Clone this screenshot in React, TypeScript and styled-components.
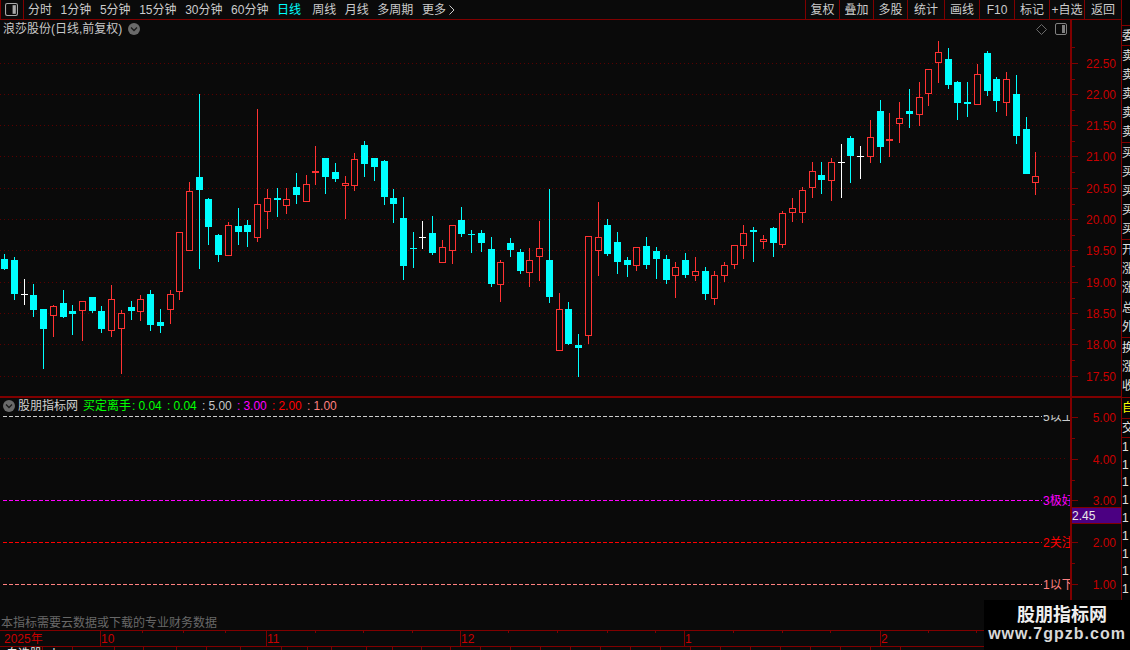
import React from "react";
import styled, { createGlobalStyle } from "styled-components";

const FONT = '"Liberation Sans", "Noto Sans CJK SC", sans-serif';
const BG = "#0a0a0a";
const LINE = "#800000";
const AXIS = "#c80000";
const GRID = "#5a0000";

const Global = createGlobalStyle`
  html, body { margin: 0; padding: 0; background: ${BG}; }
  * { box-sizing: border-box; }
`;

const Page = styled.div`
  position: relative;
  width: 1130px;
  height: 650px;
  display: flex;
  overflow: hidden;
  background: ${BG};
  font: 12px/1 ${FONT};
  color: #cccccc;
`;
const LeftColumn = styled.div`
  width: 1122px;
  flex: none;
  display: flex;
  flex-direction: column;
  border-right: 1px solid ${LINE};
`;
const TopBar = styled.div`
  height: 20px;
  flex: none;
  display: flex;
  align-items: stretch;
  border-bottom: 1px solid ${LINE};
`;
const LayoutButton = styled.div`
  width: 24px;
  display: flex;
  align-items: center;
  justify-content: center;
  border-left: 1px solid ${LINE};
  border-right: 1px solid ${LINE};
  padding-right: 1px;
`;
const PeriodList = styled.div`
  display: flex;
  align-items: center;
  gap: 8.6px;
  padding-left: 4px;
`;
const PeriodItem = styled.span<{ $active?: boolean }>`
  color: ${(p) => (p.$active ? "#00ffff" : "#cccccc")};
  margin-right: ${(p) => (p.$active ? "2.5px" : "0")};
  display: inline-flex;
  align-items: center;
  gap: 3px;
  white-space: nowrap;
`;
const ToolList = styled.div`
  margin-left: auto;
  display: flex;
  align-items: stretch;
`;
const ToolButton = styled.div<{ $w: number }>`
  width: ${(p) => p.$w}px;
  display: flex;
  align-items: center;
  justify-content: center;
  border-left: 1px solid ${LINE};
  white-space: nowrap;
`;
const Pane = styled.div<{ $h: number; $divider?: boolean }>`
  height: ${(p) => p.$h}px;
  flex: none;
  display: grid;
  grid-template-columns: 1070px 51px;
  border-bottom: ${(p) => (p.$divider ? `2px solid ${LINE}` : "none")};
`;
const PlotArea = styled.div`
  position: relative;
  display: flex;
  flex-direction: column;
  overflow: hidden;
`;
const ChartSvg = styled.svg`
  position: absolute;
  left: 0;
  top: 0;
  display: block;
  shape-rendering: crispEdges;
  font-family: ${FONT};
  font-size: 12px;
`;
const PaneHeader = styled.div`
  position: relative;
  display: flex;
  align-items: center;
  height: 18px;
  padding: 0 3px;
`;
const Title = styled.span`
  color: #c8c8c8;
  white-space: nowrap;
  margin-right: 6px;
`;
const HeaderIcons = styled.div`
  margin-left: auto;
  display: flex;
  align-items: center;
  gap: 8px;
`;
const LegendRow = styled.div`
  position: relative;
  display: flex;
  align-items: center;
  height: 15px;
  padding-left: 3px;
`;
const LegendName = styled.span`
  color: #d0d0d0;
  margin: 0 5px 0 3px;
  white-space: nowrap;
`;
const LegendLabel = styled.span`
  color: #00ff00;
  white-space: nowrap;
`;
const LegendValue = styled.span<{ $c: string }>`
  display: inline-flex;
  width: 35px;
  flex: none;
  padding-left: 1px;
  gap: 3px;
  color: ${(p) => p.$c};
  white-space: nowrap;
`;
const Notice = styled.div`
  position: relative;
  margin-top: auto;
  height: 13px;
  padding-left: 1px;
  color: #686868;
  white-space: nowrap;
`;
const AxisCell = styled.div`
  position: relative;
  border-left: 2px solid ${LINE};
  overflow: hidden;
`;
const AxisSvg = styled.svg`
  display: block;
  shape-rendering: crispEdges;
  font-family: ${FONT};
  font-size: 12px;
`;
const PriceTag = styled.div`
  position: absolute;
  left: 0;
  right: 0;
  top: 109px;
  height: 17px;
  padding: 2px 0 0 0;
  background: #4b0082;
  border-top: 1px solid ${LINE};
  border-bottom: 1px solid ${LINE};
  color: #e8e8e8;
`;
const DateRow = styled.div`
  height: 17px;
  flex: none;
  border-top: 1px solid ${LINE};
  border-bottom: 1px solid ${LINE};
  overflow: hidden;
`;
const TabRow = styled.div`
  height: 3px;
  flex: none;
  display: flex;
  overflow: hidden;
`;
const Tab = styled.div<{ $w: number }>`
  width: ${(p) => p.$w}px;
  flex: none;
  border-right: 1px solid ${LINE};
  color: #e8e8e8;
  white-space: nowrap;
  padding-left: 6px;
  line-height: 14px;
  overflow: hidden;
`;
const SideStrip = styled.div`
  width: 8px;
  flex: none;
  display: flex;
  flex-direction: column;
  overflow: hidden;
  background: #050505;
`;
const StripGap = styled.div<{ $h: number }>`
  height: ${(p) => p.$h}px;
  flex: none;
`;
const StripGroup = styled.div<{ $h: number }>`
  height: ${(p) => p.$h}px;
  flex: none;
  border-top: 1px solid ${LINE};
  display: flex;
  flex-direction: column;
  overflow: hidden;
`;
const StripCell = styled.div<{ $h: number; $c?: string }>`
  height: ${(p) => p.$h}px;
  flex: none;
  display: flex;
  align-items: center;
  width: 12px;
  color: ${(p) => p.$c || "#e0e0e0"};
`;
const Watermark = styled.div`
  position: absolute;
  left: 984px;
  top: 600px;
  width: 146px;
  height: 50px;
  background: #000;
  display: flex;
  flex-direction: column;
  align-items: center;
  padding-top: 5px;
`;
const WatermarkName = styled.div`
  font: bold 18px/20px ${FONT};
  color: #eeeeee;
  margin-left: 10px;
`;
const WatermarkUrl = styled.div`
  font: bold 16px/18px ${FONT};
  letter-spacing: 1px;
  color: #d8d8d8;
  white-space: nowrap;
`;

type K = "c" | "r" | "w";
type Candle = [number, number, number, number, number, K];
const CANDLES: Candle[] = [
  [4, 254, 259, 269, 270, "c"], [14, 257, 260, 294, 300, "c"], [24, 279, 294, 295, 305, "w"],
  [33, 284, 295, 310, 317, "c"], [43, 309, 309, 329, 369, "c"], [53, 305, 306, 316, 337, "r"],
  [63, 290, 303, 317, 318, "c"], [72, 305, 311, 314, 335, "c"], [82, 301, 301, 311, 341, "r"],
  [92, 297, 297, 311, 313, "c"], [101, 306, 311, 329, 333, "c"], [111, 285, 299, 331, 337, "r"],
  [121, 310, 313, 329, 374, "r"], [131, 301, 307, 311, 320, "c"], [140, 295, 299, 312, 321, "r"],
  [150, 290, 294, 325, 331, "c"], [160, 309, 322, 326, 333, "c"], [170, 290, 294, 310, 324, "r"],
  [179, 232, 232, 292, 300, "r"], [189, 182, 191, 251, 251, "r"], [199, 94, 177, 190, 269, "c"],
  [208, 198, 199, 227, 245, "c"], [218, 234, 235, 255, 262, "c"], [228, 222, 225, 256, 256, "r"],
  [238, 208, 226, 232, 245, "c"], [247, 220, 225, 232, 247, "c"], [257, 109, 204, 238, 242, "r"],
  [267, 189, 198, 212, 229, "r"], [277, 188, 198, 200, 217, "c"], [286, 188, 199, 206, 214, "r"],
  [296, 173, 187, 195, 204, "c"], [306, 175, 184, 202, 202, "r"], [315, 146, 171, 173, 185, "r"],
  [325, 158, 158, 177, 194, "c"], [335, 163, 172, 179, 182, "c"], [345, 176, 183, 186, 219, "r"],
  [354, 153, 159, 186, 191, "r"], [364, 141, 145, 164, 177, "c"], [374, 158, 158, 167, 181, "c"],
  [384, 160, 161, 197, 205, "c"], [393, 189, 198, 204, 223, "c"], [403, 197, 218, 266, 280, "c"],
  [413, 232, 248, 249, 268, "c"], [422, 221, 237, 238, 249, "w"], [432, 216, 233, 253, 255, "c"],
  [442, 240, 247, 263, 263, "r"], [452, 225, 225, 251, 264, "r"], [461, 207, 220, 234, 237, "c"],
  [471, 230, 234, 235, 253, "c"], [481, 230, 233, 243, 252, "c"], [491, 237, 249, 284, 287, "c"],
  [500, 260, 262, 285, 302, "r"], [510, 238, 243, 250, 257, "c"], [520, 249, 252, 271, 274, "c"],
  [529, 248, 260, 273, 287, "r"], [539, 221, 248, 257, 281, "r"], [549, 189, 260, 297, 303, "c"],
  [559, 293, 309, 351, 351, "r"], [568, 302, 309, 344, 345, "c"], [578, 334, 345, 348, 377, "c"],
  [588, 236, 236, 336, 344, "r"], [598, 202, 237, 251, 276, "r"], [607, 219, 225, 254, 256, "c"],
  [617, 232, 242, 262, 274, "c"], [627, 257, 260, 265, 277, "c"], [636, 247, 247, 266, 271, "r"],
  [646, 237, 246, 265, 269, "c"], [656, 247, 251, 259, 279, "c"], [666, 255, 259, 280, 284, "c"],
  [675, 262, 267, 276, 298, "r"], [685, 253, 260, 275, 278, "c"], [695, 257, 271, 276, 281, "r"],
  [705, 267, 271, 294, 300, "c"], [714, 271, 275, 299, 305, "r"], [724, 262, 265, 276, 282, "r"],
  [734, 245, 245, 265, 269, "r"], [743, 225, 233, 246, 259, "r"], [753, 227, 230, 232, 262, "c"],
  [763, 235, 239, 242, 249, "r"], [773, 227, 228, 243, 257, "c"], [782, 211, 213, 245, 248, "r"],
  [792, 198, 208, 213, 222, "r"], [802, 187, 190, 213, 223, "r"], [812, 162, 171, 188, 198, "r"],
  [821, 162, 175, 180, 194, "c"], [831, 158, 162, 181, 201, "r"], [841, 144, 162, 163, 198, "w"],
  [850, 136, 138, 156, 183, "c"], [860, 146, 156, 157, 179, "w"], [870, 120, 137, 157, 163, "r"],
  [880, 100, 111, 147, 163, "c"], [889, 113, 139, 141, 157, "r"], [899, 102, 118, 124, 143, "r"],
  [909, 89, 111, 114, 128, "c"], [919, 82, 97, 115, 126, "r"], [928, 69, 69, 94, 106, "r"],
  [938, 41, 52, 63, 83, "r"], [948, 48, 59, 85, 89, "c"], [957, 81, 82, 103, 120, "c"],
  [967, 82, 102, 104, 117, "c"], [977, 64, 74, 105, 105, "r"], [987, 51, 53, 91, 96, "c"],
  [996, 77, 79, 101, 112, "c"], [1006, 72, 79, 103, 116, "r"], [1016, 75, 94, 136, 144, "c"],
  [1026, 117, 129, 174, 174, "c"], [1035, 152, 176, 183, 195, "r"],
];

const RED = "#ff3232";
const PRICE_Y = Array.from({ length: 11 }, (_, i) => Math.round(62.5 + i * 31.3));
const PRICES = ["22.50", "22.00", "21.50", "21.00", "20.50", "20.00", "19.50", "19.00", "18.50", "18.00", "17.50"];
const INDEX_LEVELS: [string, number][] = [["5.00", 417], ["4.00", 459], ["3.00", 500], ["2.00", 542], ["1.00", 584]];

const Candles = () => (
  <>
    {CANDLES.map(([x, wt, bt, bb, wb, k], i) => {
      if (k === "r") {
        const thin = bb - bt <= 2;
        return (
          <g key={i}>
            <rect x={x} y={wt} width={1} height={wb - wt} fill={RED} />
            {thin ? (
              <rect x={x - 3} y={bt} width={7} height={bb - bt} fill={RED} />
            ) : (
              <rect x={x - 2.5} y={bt + 0.5} width={6} height={bb - bt - 1} fill={BG} stroke={RED} strokeWidth={1} />
            )}
          </g>
        );
      }
      const color = k === "c" ? "#00ffff" : "#ffffff";
      return (
        <g key={i}>
          <rect x={x} y={wt} width={1} height={wb - wt} fill={color} />
          <rect x={x - 3} y={bt} width={7} height={bb - bt} fill={color} />
        </g>
      );
    })}
  </>
);

const MainChart = () => (
  <ChartSvg width={1070} height={376} viewBox="0 20 1070 376">
    {PRICE_Y.map((y) => (
      <line key={y} x1={0} x2={1070} y1={y + 0.5} y2={y + 0.5} stroke={GRID} strokeDasharray="1 3" />
    ))}
    <Candles />
  </ChartSvg>
);

const IndexChart = () => (
  <ChartSvg width={1070} height={232} viewBox="0 398 1070 232">
    <defs>
      <clipPath id="clip-top-label">
        <rect x={1040} y={415} width={30} height={20} />
      </clipPath>
    </defs>
    <line x1={3} x2={1042} y1={416.5} y2={416.5} stroke="#cccccc" strokeDasharray="4 2" />
    <line x1={0} x2={1067} y1={458.5} y2={458.5} stroke={GRID} strokeDasharray="1 3" />
    <line x1={3} x2={1042} y1={500.5} y2={500.5} stroke="#ff00ff" strokeDasharray="4 2" />
    <line x1={3} x2={1042} y1={542.5} y2={542.5} stroke="#ff0000" strokeDasharray="4 2" />
    <line x1={3} x2={1042} y1={584.5} y2={584.5} stroke="#ff8080" strokeDasharray="4 2" />
    <text x={1043} y={421} fill="#cccccc" clipPath="url(#clip-top-label)">5以上</text>
    <text x={1043} y={505} fill="#ff00ff">3极好</text>
    <text x={1043} y={547} fill="#ff0000">2关注</text>
    <text x={1043} y={589} fill="#ff8080">1以下</text>
  </ChartSvg>
);

const MainAxis = () => (
  <AxisSvg width={49} height={376} viewBox="1072 20 49 376">
    <rect x={1072} y={47} width={3} height={1} fill={LINE} />
    {PRICE_Y.map((y, i) => (
      <g key={y}>
        <rect x={1072} y={y} width={6} height={1} fill={LINE} />
        {i < 10 && <rect x={1072} y={y + 16} width={3} height={1} fill={LINE} />}
        <text x={1116} y={y + 5} textAnchor="end" fill={AXIS}>{PRICES[i]}</text>
      </g>
    ))}
  </AxisSvg>
);

const IndexAxis = () => (
  <AxisSvg width={49} height={232} viewBox="1072 398 49 232">
    {INDEX_LEVELS.map(([t, y], i) => (
      <g key={t}>
        <rect x={1072} y={y} width={6} height={1} fill={LINE} />
        {i < 4 && <rect x={1072} y={y + 21} width={3} height={1} fill={LINE} />}
        <text x={1116} y={y + 5} textAnchor="end" fill={AXIS}>{t}</text>
      </g>
    ))}
  </AxisSvg>
);

const DATE_LABELS: [string, number][] = [["2025年", 4], ["10", 101], ["11", 267], ["12", 461], ["1", 685], ["2", 881]];
const DATE_MAJOR = [100, 266, 460, 684, 880];
const DATE_MINOR = [142, 183, 225, 315, 363, 412, 508, 557, 607, 655, 733, 782, 830, 928, 976];

const DateAxis = () => (
  <AxisSvg width={1121} height={15} viewBox="0 631 1121 15">
    {DATE_MAJOR.map((x) => <rect key={x} x={x} y={631} width={1} height={15} fill={LINE} />)}
    {DATE_MINOR.map((x) => <rect key={x} x={x} y={631} width={1} height={2} fill={LINE} />)}
    {DATE_LABELS.map(([t, x]) => <text key={t} x={x} y={643} fill={AXIS}>{t}</text>)}
    <rect x={1070} y={631} width={2} height={15} fill={LINE} />
  </AxisSvg>
);

const Chevron = () => (
  <svg width="12" height="12" viewBox="0 0 12 12" style={{ flex: "none" }}>
    <circle cx="6" cy="6" r="6" fill="#6a6a6a" />
    <path d="M3 4.5 L6 7.5 L9 4.5" fill="none" stroke="#1a1a1a" strokeWidth="1.3" />
  </svg>
);

const PanelIcon = ({ size, tone }: { size: number; tone: string }) => (
  <svg width={size} height={size} viewBox="0 0 12 12" style={{ flex: "none" }}>
    <rect x="0.5" y="0.5" width="11" height="11" rx="1.5" fill="none" stroke={tone} />
    <rect x="7" y="2" width="3" height="8" fill={tone} />
  </svg>
);

const Diamond = () => (
  <svg width="11" height="11" viewBox="0 0 11 11" style={{ flex: "none" }}>
    <path d="M5.5 0.5 L10.5 5.5 L5.5 10.5 L0.5 5.5 Z" fill="none" stroke="#6a6a6a" />
  </svg>
);

const MoreArrow = () => (
  <svg width="6" height="10" viewBox="0 0 6 10">
    <path d="M0.5 0.5 L5 5 L0.5 9.5" fill="none" stroke="#cccccc" />
  </svg>
);

const PERIODS = ["分时", "1分钟", "5分钟", "15分钟", "30分钟", "60分钟", "日线", "周线", "月线", "多周期"];
const TOOLS: [string, number][] = [
  ["复权", 34], ["叠加", 34], ["多股", 34], ["统计", 37], ["画线", 35], ["F10", 35], ["标记", 35], ["+自选", 35], ["返回", 37],
];
const LEGEND: [string, string][] = [
  ["0.04", "#00ff00"], ["0.04", "#00ff00"], ["5.00", "#c8c8c8"], ["3.00", "#ff00ff"], ["2.00", "#ff0000"], ["1.00", "#ff8080"],
];
const TAB_WIDTHS = [43, 30, 42, 29, 33, 30, 34, 41, 26, 24, 35, 26, 29, 29, 30, 30, 30, 30, 30, 30, 30, 30, 30, 30, 30, 30, 30, 30, 30];
const TOP_STRIP = ["卖", "卖", "卖", "卖", "卖"];
const BUY_STRIP = ["买", "买", "买", "买", "买"];
const INFO_STRIP = ["开", "涨", "涨", "总", "外"];
const LAST_STRIP = ["换", "涨", "收"];

export default function App() {
  return (
    <Page>
      <Global />
      <LeftColumn>
        <TopBar>
          <LayoutButton>
            <PanelIcon size={13} tone="#a8a8a8" />
          </LayoutButton>
          <PeriodList>
            {PERIODS.map((p) => (
              <PeriodItem key={p} $active={p === "日线"}>{p}</PeriodItem>
            ))}
            <PeriodItem>更多<MoreArrow /></PeriodItem>
          </PeriodList>
          <ToolList>
            {TOOLS.map(([t, w]) => (
              <ToolButton key={t} $w={w}>{t}</ToolButton>
            ))}
          </ToolList>
        </TopBar>
        <Pane $h={378} $divider>
          <PlotArea>
            <MainChart />
            <PaneHeader>
              <Title>浪莎股份(日线,前复权)</Title>
              <Chevron />
              <HeaderIcons>
                <Diamond />
                <PanelIcon size={12} tone="#808080" />
              </HeaderIcons>
            </PaneHeader>
          </PlotArea>
          <AxisCell>
            <MainAxis />
          </AxisCell>
        </Pane>
        <Pane $h={232}>
          <PlotArea>
            <IndexChart />
            <LegendRow>
              <Chevron />
              <LegendName>股朋指标网</LegendName>
              <LegendLabel>买定离手</LegendLabel>
              {LEGEND.map(([v, c], i) => (
                <LegendValue key={i} $c={c}>
                  <span>:</span>
                  <span>{v}</span>
                </LegendValue>
              ))}
            </LegendRow>
            <Notice>本指标需要云数据或下载的专业财务数据</Notice>
          </PlotArea>
          <AxisCell>
            <IndexAxis />
            <PriceTag>2.45</PriceTag>
          </AxisCell>
        </Pane>
        <DateRow>
          <DateAxis />
        </DateRow>
        <TabRow>
          {TAB_WIDTHS.map((w, i) => (
            <Tab key={i} $w={w}>{i === 0 ? "自选股" : i === 1 ? "卜" : ""}</Tab>
          ))}
        </TabRow>
      </LeftColumn>
      <SideStrip>
        <StripGap $h={25} />
        <StripGroup $h={20}>
          <StripCell $h={19}>委</StripCell>
        </StripGroup>
        <StripGroup $h={97}>
          {TOP_STRIP.map((c, i) => <StripCell key={i} $h={19.2}>{c}</StripCell>)}
        </StripGroup>
        <StripGroup $h={97}>
          {BUY_STRIP.map((c, i) => <StripCell key={i} $h={19.2}>{c}</StripCell>)}
        </StripGroup>
        <StripGroup $h={98}>
          {INFO_STRIP.map((c, i) => <StripCell key={i} $h={19.4}>{c}</StripCell>)}
        </StripGroup>
        <StripGroup $h={60}>
          {LAST_STRIP.map((c, i) => <StripCell key={i} $h={19.4}>{c}</StripCell>)}
        </StripGroup>
        <StripGroup $h={21}>
          <StripCell $h={20} $c="#ffff00">自</StripCell>
        </StripGroup>
        <StripGroup $h={19}>
          <StripCell $h={18}>交</StripCell>
        </StripGroup>
        <StripGroup $h={180}>
          {Array.from({ length: 10 }, (_, i) => <StripCell key={i} $h={17.8}>1</StripCell>)}
        </StripGroup>
      </SideStrip>
      <Watermark>
        <WatermarkName>股朋指标网</WatermarkName>
        <WatermarkUrl>www.7gpzb.com</WatermarkUrl>
      </Watermark>
    </Page>
  );
}
